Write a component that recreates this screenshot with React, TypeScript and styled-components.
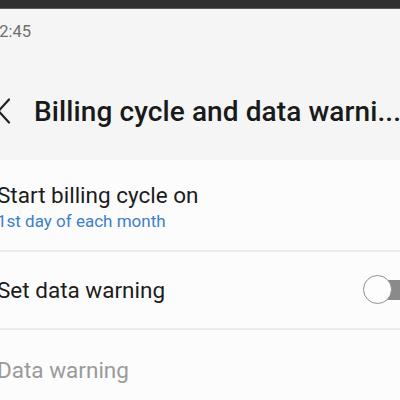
import styled, { createGlobalStyle } from "styled-components";

const Global = createGlobalStyle`
    html, body {
        margin: 0;
        padding: 0;
        width: 400px;
        height: 400px;
        overflow: hidden;
        background: #fcfcfc;
        font-family: Roboto, "Noto Sans", sans-serif;
    }
`;

const Screen = styled.div`
    width: 440px;
    margin-left: -24px;
    display: flex;
    flex-direction: column;
`;

const Bezel = styled.div`
    height: 8px;
    background: #2f2f2f;
    border-bottom: 1px solid #5a5a5a;
`;

const Header = styled.div`
    background: #f5f5f5;
    height: 151px;
    display: flex;
    flex-direction: column;
`;

const StatusBar = styled.div`
    height: 44px;
    display: flex;
    align-items: center;
    padding-left: 14px;
    font-size: 16.5px;
    color: #6f6f6f;
`;

const AppBar = styled.div`
    display: flex;
    align-items: center;
    gap: 22px;
    padding-left: 20px;
    height: 52px;
    margin-top: 32px;
`;

const Title = styled.h1`
    margin: 0;
    font-size: 28px;
    font-weight: 500;
    color: #1a1a1a;
    letter-spacing: 0.1px;
    white-space: nowrap;
`;

const List = styled.div`
    background: #fcfcfc;
    display: flex;
    flex-direction: column;
`;

const Row = styled.div<{ $h: number; $last?: boolean }>`
    height: ${(p) => p.$h}px;
    display: flex;
    align-items: center;
    justify-content: space-between;
    padding-left: 21px;
    border-bottom: ${(p) => (p.$last ? "none" : "2px solid #ebebeb")};
    box-sizing: border-box;
`;

const Texts = styled.div`
    display: flex;
    flex-direction: column;
    gap: 3px;
    padding-top: 2px;
`;

const Label = styled.div<{ $dim?: boolean }>`
    font-size: 22.5px;
    color: ${(p) => (p.$dim ? "#9a9a9a" : "#1c1c1c")};
`;

const Sub = styled.div`
    font-size: 17px;
    color: #3d7fc9;
`;

const Toggle = styled.div`
    position: relative;
    width: 64px;
    height: 30px;
    margin-right: -11px;
    flex-shrink: 0;
`;

const Track = styled.div`
    position: absolute;
    left: 15px;
    top: 5px;
    width: 60px;
    height: 20px;
    background: #8a8a8a;
`;

const Knob = styled.div`
    position: absolute;
    left: 0;
    top: 0;
    width: 27px;
    height: 27px;
    border-radius: 50%;
    background: #fdfdfd;
    border: 1.5px solid #8f8f8f;
`;

function Back() {
    return (
        <svg width="16" height="26" viewBox="0 0 16 26">
            <path d="M13 1.5 L2.5 13 L13 24.5" fill="none" stroke="#222" strokeWidth="2.2" strokeLinecap="round" strokeLinejoin="round" />
        </svg>
    );
}

export default function App() {
    return (
        <>
            <Global />
            <Screen>
                <Bezel />
                <Header>
                    <StatusBar>12:45</StatusBar>
                    <AppBar>
                        <Back />
                        <Title>Billing cycle and data warni...</Title>
                    </AppBar>
                </Header>
                <List>
                    <Row $h={92}>
                        <Texts>
                            <Label>Start billing cycle on</Label>
                            <Sub>1st day of each month</Sub>
                        </Texts>
                    </Row>
                    <Row $h={78}>
                        <Label>Set data warning</Label>
                        <Toggle>
                            <Track />
                            <Knob />
                        </Toggle>
                    </Row>
                    <Row $h={80} $last>
                        <Label $dim>Data warning</Label>
                    </Row>
                </List>
            </Screen>
        </>
    );
}
